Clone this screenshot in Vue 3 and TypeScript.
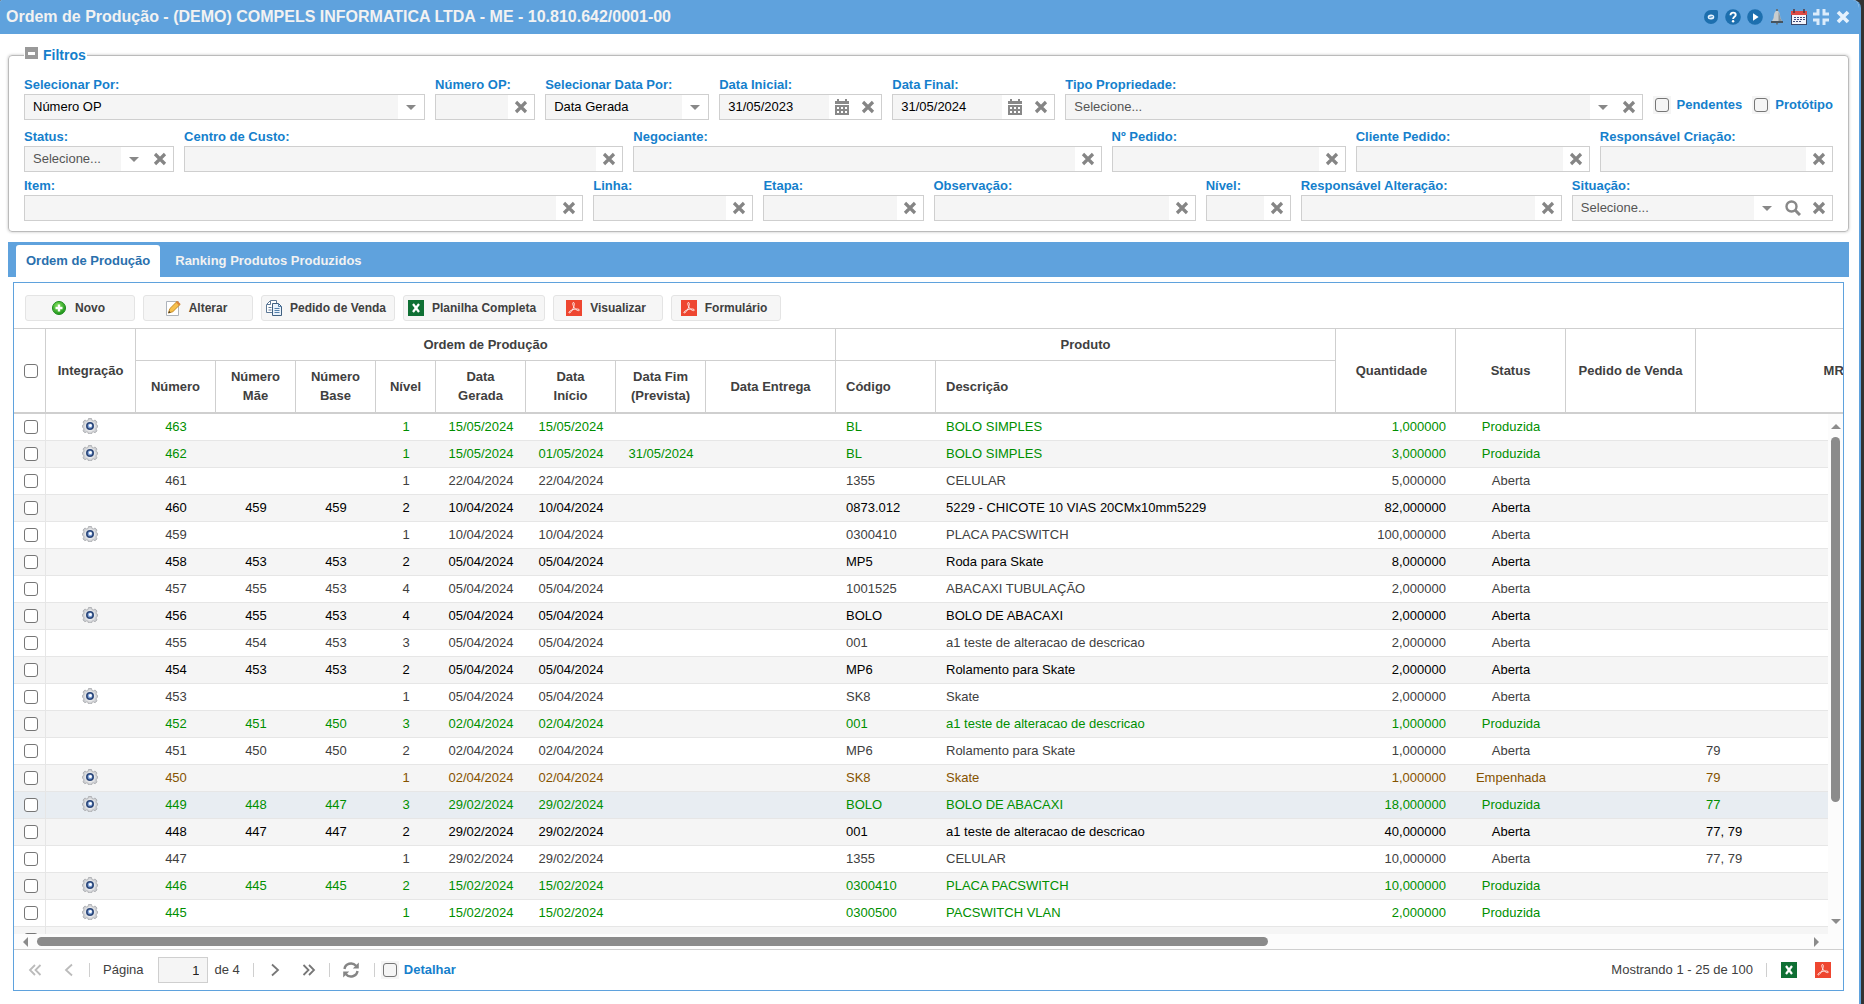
<script setup lang="ts">
import { ref } from 'vue'

type Trigger = 'arrow' | 'clear' | 'calendar' | 'search'

interface Field {
  id: string
  label: string
  kind: 'select' | 'text'
  value: string
  triggers: Trigger[]
}

interface Order {
  gear: boolean
  numero: string
  mae: string
  base: string
  nivel: string
  gerada: string
  inicio: string
  fim: string
  codigo: string
  descricao: string
  quantidade: string
  status: string
  mrp: string
}

const select = (id: string, label: string, value: string, ...triggers: Trigger[]): Field =>
  ({ id, label, kind: 'select', value, triggers })
const text = (id: string, label: string, value = '', ...triggers: Trigger[]): Field =>
  ({ id, label, kind: 'text', value, triggers: triggers.length ? triggers : ['clear'] })

const filterRows: Field[][] = [
  [
    select('selecionar-por', 'Selecionar Por:', 'Número OP', 'arrow'),
    text('numero-op', 'Número OP:'),
    select('selecionar-data', 'Selecionar Data Por:', 'Data Gerada', 'arrow'),
    text('data-inicial', 'Data Inicial:', '31/05/2023', 'calendar', 'clear'),
    text('data-final', 'Data Final:', '31/05/2024', 'calendar', 'clear'),
    select('tipo-propriedade', 'Tipo Propriedade:', 'Selecione...', 'arrow', 'clear'),
  ],
  [
    select('status', 'Status:', 'Selecione...', 'arrow', 'clear'),
    text('centro-custo', 'Centro de Custo:'),
    text('negociante', 'Negociante:'),
    text('pedido', 'Nº Pedido:'),
    text('cliente-pedido', 'Cliente Pedido:'),
    text('resp-criacao', 'Responsável Criação:'),
  ],
  [
    text('item', 'Item:'),
    text('linha', 'Linha:'),
    text('etapa', 'Etapa:'),
    text('observacao', 'Observação:'),
    text('nivel', 'Nível:'),
    text('resp-alteracao', 'Responsável Alteração:'),
    select('situacao', 'Situação:', 'Selecione...', 'arrow', 'search', 'clear'),
  ],
]

const triggerNames: Record<Trigger, string> = {
  arrow: 'Abrir lista', clear: 'Limpar', calendar: 'Calendário', search: 'Pesquisar',
}

const titleTools = [
  { icon: 'chat', name: 'Chat' },
  { icon: 'help', name: 'Ajuda' },
  { icon: 'play', name: 'Vídeo' },
  { icon: 'bell', name: 'Alertas' },
  { icon: 'agenda', name: 'Agenda' },
  { icon: 'restore', name: 'Restaurar' },
  { icon: 'close', name: 'Fechar' },
]

const actions = [
  { icon: 'add', label: 'Novo' },
  { icon: 'edit', label: 'Alterar' },
  { icon: 'copy', label: 'Pedido de Venda' },
  { icon: 'excel', label: 'Planilha Completa' },
  { icon: 'pdf', label: 'Visualizar' },
  { icon: 'pdf', label: 'Formulário' },
]

const order = (
  gear: boolean, numero: string, mae: string, base: string, nivel: string, gerada: string, inicio: string,
  fim: string, codigo: string, descricao: string, quantidade: string, status: string, mrp = '',
): Order => ({ gear, numero, mae, base, nivel, gerada, inicio, fim, codigo, descricao, quantidade, status, mrp })

const orders: Order[] = [
  order(true, '463', '', '', '1', '15/05/2024', '15/05/2024', '', 'BL', 'BOLO SIMPLES', '1,000000', 'Produzida'),
  order(true, '462', '', '', '1', '15/05/2024', '01/05/2024', '31/05/2024', 'BL', 'BOLO SIMPLES', '3,000000', 'Produzida'),
  order(false, '461', '', '', '1', '22/04/2024', '22/04/2024', '', '1355', 'CELULAR', '5,000000', 'Aberta'),
  order(false, '460', '459', '459', '2', '10/04/2024', '10/04/2024', '', '0873.012', '5229 - CHICOTE 10 VIAS 20CMx10mm5229', '82,000000', 'Aberta'),
  order(true, '459', '', '', '1', '10/04/2024', '10/04/2024', '', '0300410', 'PLACA PACSWITCH', '100,000000', 'Aberta'),
  order(false, '458', '453', '453', '2', '05/04/2024', '05/04/2024', '', 'MP5', 'Roda para Skate', '8,000000', 'Aberta'),
  order(false, '457', '455', '453', '4', '05/04/2024', '05/04/2024', '', '1001525', 'ABACAXI TUBULAÇÃO', '2,000000', 'Aberta'),
  order(true, '456', '455', '453', '4', '05/04/2024', '05/04/2024', '', 'BOLO', 'BOLO DE ABACAXI', '2,000000', 'Aberta'),
  order(false, '455', '454', '453', '3', '05/04/2024', '05/04/2024', '', '001', 'a1 teste de alteracao de descricao', '2,000000', 'Aberta'),
  order(false, '454', '453', '453', '2', '05/04/2024', '05/04/2024', '', 'MP6', 'Rolamento para Skate', '2,000000', 'Aberta'),
  order(true, '453', '', '', '1', '05/04/2024', '05/04/2024', '', 'SK8', 'Skate', '2,000000', 'Aberta'),
  order(false, '452', '451', '450', '3', '02/04/2024', '02/04/2024', '', '001', 'a1 teste de alteracao de descricao', '1,000000', 'Produzida'),
  order(false, '451', '450', '450', '2', '02/04/2024', '02/04/2024', '', 'MP6', 'Rolamento para Skate', '1,000000', 'Aberta', '79'),
  order(true, '450', '', '', '1', '02/04/2024', '02/04/2024', '', 'SK8', 'Skate', '1,000000', 'Empenhada', '79'),
  order(true, '449', '448', '447', '3', '29/02/2024', '29/02/2024', '', 'BOLO', 'BOLO DE ABACAXI', '18,000000', 'Produzida', '77'),
  order(false, '448', '447', '447', '2', '29/02/2024', '29/02/2024', '', '001', 'a1 teste de alteracao de descricao', '40,000000', 'Aberta', '77, 79'),
  order(false, '447', '', '', '1', '29/02/2024', '29/02/2024', '', '1355', 'CELULAR', '10,000000', 'Aberta', '77, 79'),
  order(true, '446', '445', '445', '2', '15/02/2024', '15/02/2024', '', '0300410', 'PLACA PACSWITCH', '10,000000', 'Produzida'),
  order(true, '445', '', '', '1', '15/02/2024', '15/02/2024', '', '0300500', 'PACSWITCH VLAN', '2,000000', 'Produzida'),
  order(false, '', '', '', '', '', '', '', '', '', '', ''),
]

const activeRow = ref('449')
const page = ref('1')
const columns = ['check', 'integ', 'num', 'num', 'num', 'level', 'date', 'date', 'date', 'due', 'code', 'desc', 'qty', 'state', 'sale', 'mrp']
</script>

<template>
  <svg class="sprite" aria-hidden="true">
    <defs>
      <radialGradient id="g-add" cx="0.4" cy="0.3" r="0.8">
        <stop offset="0" stop-color="#7fe05a" /><stop offset="1" stop-color="#118a12" />
      </radialGradient>
      <radialGradient id="g-gear"><stop offset="0.3" stop-color="#fff" /><stop offset="1" stop-color="#c4c6ca" /></radialGradient>
    </defs>
    <symbol id="i-arrow" viewBox="0 0 16 16"><path d="M3 6h10l-5 5z" fill="#888" /></symbol>
    <symbol id="i-clear" viewBox="0 0 16 16"><path d="M3 3l10 10M13 3L3 13" stroke="#858585" stroke-width="3.200" fill="none" /></symbol>
    <symbol id="i-calendar" viewBox="0 0 16 16">
      <path fill="#888" fill-rule="evenodd" d="M1 2h2V0h2v2h6V0h2v2h2v3H1zM1 6h14v10H1zM3 8v2h2V8zM7 8v2h2V8zM11 8v2h2V8zM3 12v2h2v-2zM7 12v2h2v-2zM11 12v2h2v-2z" />
    </symbol>
    <symbol id="i-search" viewBox="0 0 16 16"><circle cx="6.500" cy="6.500" r="5" fill="none" stroke="#888" stroke-width="2.400" /><path d="M10 10l5 5" stroke="#888" stroke-width="3" /></symbol>
    <symbol id="i-chat" viewBox="0 0 16 16"><path d="M8 1h5.500q1.500 0 1.500 1.500V8a7 7 0 0 1-14 0a7 7 0 0 1 7-7z" fill="#1d6fae" /><ellipse cx="8" cy="8" rx="3.300" ry="2.500" fill="#e8f4ff" /><path d="M6.300 8.300l3.400-.6" stroke="#1d6fae" /></symbol>
    <symbol id="i-help" viewBox="0 0 16 16"><circle cx="8" cy="8" r="7.800" fill="#1d6fae" /><path d="M5.500 6.200c0-3.600 5.200-3.200 5.200-.3C10.700 7.700 8.100 7.800 8.100 9.900" fill="none" stroke="#fff" stroke-width="1.900" /><circle cx="8.100" cy="12.200" r="1.200" fill="#fff" /></symbol>
    <symbol id="i-play" viewBox="0 0 16 16"><circle cx="8" cy="8" r="7.800" fill="#1d6fae" /><path d="M6 4.300L11.600 8 6 11.700z" fill="#fff" /></symbol>
    <symbol id="i-bell" viewBox="0 0 16 16"><path d="M8 1.500c3.200 1 3 5 3.400 7.500L13 12H3l1.600-3C5 6.500 4.800 2.500 8 1.500z" fill="#c9cdcf" /><path d="M9.500 3c1.500 2 1.300 4.500 2 6.500l1.500 2.500H9.500z" fill="#8d979d" /><path d="M2 12h12v2H2z" fill="#46545f" /><path d="M7 0h2v2H7zM7 14h2v1.500H7z" fill="#66737d" /></symbol>
    <symbol id="i-agenda" viewBox="0 0 16 16"><path d="M0 2h16v14H0z" fill="#3a4566" /><path d="M0 2h16v4H0z" fill="#dd4a45" /><path d="M3 0v4M13 0v4" stroke="#4c3238" stroke-width="1.400" /><path d="M1 6h14v9H1z" fill="#f3f4fa" /><path d="M3 8.500h11M3 10.500h11M2 12.500h9" stroke="#3e4a7c" stroke-dasharray="2 1" /></symbol>
    <symbol id="i-restore" viewBox="0 0 16 16"><path d="M5 0v5H0M11 0v5h5M5 16v-5H0M11 16v-5h5" fill="none" stroke="#dcecfb" stroke-width="3" /></symbol>
    <symbol id="i-close" viewBox="0 0 16 16"><path d="M3 3l10 10M13 3L3 13" stroke="#e6f2fd" stroke-width="3.600" /></symbol>
    <symbol id="i-add" viewBox="0 0 16 16"><circle cx="8" cy="8" r="6.500" fill="url(#g-add)" stroke="#1d8c1c" /><path d="M8 4.500v7M4.500 8h7" stroke="#fff" stroke-width="2.400" /></symbol>
    <symbol id="i-edit" viewBox="0 0 16 16"><path d="M1.500 1.500h12v14h-12z" fill="#fff" stroke="#aeb4bc" /><path d="M3.500 13l1.300-4.300L12 1.500l3 3-7.200 7.200z" fill="#f6c04c" stroke="#c58a25" /><path d="M11 2.500l1.500-1.500 3 3L14 5.500z" fill="#d9843f" /><path d="M3.300 13.300l.8-2.300 1.500 1.500z" fill="#333" /></symbol>
    <symbol id="i-copy" viewBox="0 0 16 16"><path d="M4.500.5h6v12H.5v-8z" fill="#fff" stroke="#5c7896" /><path d="M4.500 1v3.500H1M2.500 7.500h3M2.500 10h3" fill="none" stroke="#5c7896" /><path d="M6.500 3.500h6l3 3v9h-9z" fill="#e9f2fb" stroke="#3f5f80" /><path d="M12.500 3.500v3h3M8.500 8.500h5M8.500 10.500h5M8.500 12.500h5" fill="none" stroke="#5480aa" /></symbol>
    <symbol id="i-excel" viewBox="0 0 16 16"><path d="M0 0h16v16H0z" fill="#0f7034" /><path d="M5 4l6 8M11 4l-6 8" stroke="#fff" stroke-width="2.200" /></symbol>
    <symbol id="i-pdf" viewBox="0 0 16 16"><path d="M0 0h16v16H0z" fill="#ee4630" /><path d="M7.300 2.500c2 0 .8 4-.3 6.200-1 2.100-3 4.800-4 4.200-1-.9 2.300-3 5-3.600 2.700-.7 5.500-.3 5.400.8-.2 1.300-3.300.2-4.900-2-1.500-1.900-2.400-5.600-1.200-5.600z" fill="none" stroke="#fff" stroke-width="0.800" /></symbol>
    <symbol id="i-gear" viewBox="0 0 16 16"><path d="M6.500.5h3l.5 2 1.200.5 1.900-1 1.900 2-1 1.900.5 1.100 1 .3v2l-1 .5-.5 1.200 1 1.900-1.900 1.900-1.900-1-1.200.5-.5 1.700h-3l-.5-1.700-1.200-.5-1.900 1L1 12.900 2 11l-.5-1.200-1-.5v-2l1-.3L2 5.900 1 4l1.900-2 1.900 1L6 2.500z" fill="url(#g-gear)" stroke="#a9abaf" stroke-width="0.800" /><circle cx="8" cy="8" r="3.200" fill="#7fa2d8" stroke="#2b4678" stroke-width="1.600" /><circle cx="8.400" cy="7.600" r="1.500" fill="#fff" /></symbol>
    <symbol id="i-first" viewBox="0 0 16 16"><path d="M8 3L3 8l5 5M13.500 3l-5 5 5 5" fill="none" stroke="#bbb" stroke-width="1.800" /></symbol>
    <symbol id="i-prev" viewBox="0 0 16 16"><path d="M11 2.500L5 8l6 5.500" fill="none" stroke="#bbb" stroke-width="1.800" /></symbol>
    <symbol id="i-next" viewBox="0 0 16 16"><path d="M5 2.500L11 8l-6 5.500" fill="none" stroke="#777" stroke-width="1.800" /></symbol>
    <symbol id="i-last" viewBox="0 0 16 16"><path d="M2.500 3l5 5-5 5M8 3l5 5-5 5" fill="none" stroke="#777" stroke-width="1.800" /></symbol>
    <symbol id="i-refresh" viewBox="0 0 16 16"><path d="M1.500 7A6.500 6.200 0 0 1 13 3.800M14.500 9A6.500 6.200 0 0 1 3 12.200" fill="none" stroke="#858585" stroke-width="2.400" /><path d="M15.800.5v6h-6zM.2 15.500v-6h6z" fill="#858585" /></symbol>
  </svg>

  <div class="window">
    <header class="titlebar">
      <h1>Ordem de Produção - (DEMO) COMPELS INFORMATICA LTDA - ME - 10.810.642/0001-00</h1>
      <div class="tools">
        <button v-for="tool in titleTools" :key="tool.icon" type="button" :aria-label="tool.name">
          <svg class="icon"><use :href="'#i-' + tool.icon" /></svg>
        </button>
      </div>
    </header>

    <main>
      <fieldset>
        <legend>
          <button type="button" class="collapse" aria-label="Recolher filtros"></button>
          Filtros
        </legend>
        <div v-for="(row, r) in filterRows" :key="r" class="filters" :class="'filters-' + (r + 1)">
          <div v-for="field in row" :key="field.id" class="field">
            <label :for="field.id">{{ field.label }}</label>
            <div class="box">
              <select v-if="field.kind === 'select'" :id="field.id" :class="{ hint: field.value === 'Selecione...' }">
                <option>{{ field.value }}</option>
              </select>
              <input v-else :id="field.id" type="text" :value="field.value" />
              <button v-for="t in field.triggers" :key="t" type="button" :aria-label="triggerNames[t]">
                <svg class="icon"><use :href="'#i-' + t" /></svg>
              </button>
            </div>
          </div>
          <div v-if="r === 0" class="flags">
            <label><span class="tick"><input type="checkbox" /></span>Pendentes</label>
            <label><span class="tick"><input type="checkbox" /></span>Protótipo</label>
          </div>
        </div>
      </fieldset>

      <nav class="tabs">
        <button type="button" class="active">Ordem de Produção</button>
        <button type="button">Ranking Produtos Produzidos</button>
      </nav>

      <section class="panel">
        <div class="toolbar">
          <button v-for="action in actions" :key="action.label" type="button">
            <svg class="icon"><use :href="'#i-' + action.icon" /></svg>
            <span>{{ action.label }}</span>
          </button>
        </div>

        <div class="grid">
          <div class="viewport">
            <table>
              <colgroup>
                <col v-for="(c, i) in columns" :key="i" :class="'col-' + c" />
              </colgroup>
              <thead>
                <tr class="group">
                  <th rowspan="2" class="check"><input type="checkbox" aria-label="Selecionar todos" /></th>
                  <th rowspan="2">Integração</th>
                  <th colspan="8" class="span">Ordem de Produção</th>
                  <th colspan="2" class="span">Produto</th>
                  <th rowspan="2" class="qty">Quantidade</th>
                  <th rowspan="2">Status</th>
                  <th rowspan="2">Pedido de Venda</th>
                  <th rowspan="2">MRP</th>
                </tr>
                <tr class="leaf">
                  <th>Número</th>
                  <th>Número<br />Mãe</th>
                  <th>Número<br />Base</th>
                  <th>Nível</th>
                  <th>Data<br />Gerada</th>
                  <th>Data<br />Início</th>
                  <th>Data Fim<br />(Prevista)</th>
                  <th>Data Entrega</th>
                  <th class="left">Código</th>
                  <th class="left">Descrição</th>
                </tr>
              </thead>
              <tbody>
                <tr
                  v-for="(o, i) in orders"
                  :key="i"
                  :class="[o.status.toLowerCase(), { alt: i % 2 === 1, active: o.numero === activeRow }]"
                  @click="activeRow = o.numero"
                >
                  <td class="check"><input type="checkbox" aria-label="Selecionar ordem" /></td>
                  <td><svg v-if="o.gear" class="icon gear"><use href="#i-gear" /></svg></td>
                  <td>{{ o.numero }}</td>
                  <td>{{ o.mae }}</td>
                  <td>{{ o.base }}</td>
                  <td>{{ o.nivel }}</td>
                  <td>{{ o.gerada }}</td>
                  <td>{{ o.inicio }}</td>
                  <td>{{ o.fim }}</td>
                  <td></td>
                  <td class="left">{{ o.codigo }}</td>
                  <td class="left">{{ o.descricao }}</td>
                  <td class="right">{{ o.quantidade }}</td>
                  <td>{{ o.status }}</td>
                  <td></td>
                  <td class="left">{{ o.mrp }}</td>
                </tr>
              </tbody>
            </table>
          </div>
          <div class="vscroll"><i class="up"></i><div class="track"><b></b></div><i class="down"></i></div>
        </div>
        <div class="hscroll"><i class="prev"></i><div class="track"><b></b></div><i class="next"></i></div>

        <footer class="pager">
          <button type="button" aria-label="Primeira página" disabled><svg class="icon"><use href="#i-first" /></svg></button>
          <button type="button" aria-label="Página anterior" disabled><svg class="icon"><use href="#i-prev" /></svg></button>
          <span class="sep"></span>
          <label class="page" for="pagina">Página</label>
          <input id="pagina" v-model="page" type="text" class="page-box" />
          <span class="total">de 4</span>
          <span class="sep"></span>
          <button type="button" class="forward" aria-label="Próxima página"><svg class="icon"><use href="#i-next" /></svg></button>
          <button type="button" aria-label="Última página"><svg class="icon"><use href="#i-last" /></svg></button>
          <span class="sep"></span>
          <button type="button" class="reload" aria-label="Atualizar"><svg class="icon"><use href="#i-refresh" /></svg></button>
          <span class="sep"></span>
          <label class="detail"><span class="tick"><input type="checkbox" /></span>Detalhar</label>
          <span class="showing">Mostrando 1 - 25 de 100</span>
          <span class="sep"></span>
          <button type="button" class="export" aria-label="Exportar planilha"><svg class="icon"><use href="#i-excel" /></svg></button>
          <button type="button" class="export" aria-label="Exportar PDF"><svg class="icon"><use href="#i-pdf" /></svg></button>
        </footer>
      </section>
    </main>
  </div>
</template>

<style>
body {
  margin: 0;
  background: #333;
}
</style>

<style scoped>
.sprite {
  position: absolute;
  width: 0;
  height: 0;
}

.window {
  box-sizing: border-box;
  display: flex;
  flex-direction: column;
  height: 100vh;
  margin-right: 3px;
  border-right: 2px solid #5fa2dd;
  border-radius: 2px 8px 0 0;
  overflow: hidden;
  background: #fff;
  color: #404040;
  font: 13px/16px "Liberation Sans", Arial, sans-serif;
}

button {
  padding: 0;
  border: 0;
  background: none;
  color: inherit;
  font: inherit;
}

.icon {
  display: block;
  width: 16px;
  height: 16px;
}

input[type='checkbox'] {
  appearance: none;
  box-sizing: border-box;
  display: block;
  width: 14px;
  height: 14px;
  margin: 0;
  border: 1px solid #767676;
  border-radius: 3px;
  background: #fff;
}

input[type='checkbox']:checked {
  background: #157fcc;
}

.tick {
  display: flex;
  align-items: center;
  justify-content: center;
  width: 18px;
  height: 18px;
  background: #f5f5f5;
}

.tick input[type='checkbox'] {
  background: #f5f5f5;
}

.titlebar {
  flex: none;
  display: flex;
  align-items: center;
  justify-content: space-between;
  height: 34px;
  padding: 0 8px 0 6px;
  background: #5fa2dd;
}

h1 {
  margin: 0;
  color: #f2f2f2;
  font-size: 16px;
  line-height: 20px;
  font-weight: bold;
}

.tools {
  display: flex;
  gap: 6px;
}

main {
  flex: 1;
  min-height: 0;
  display: flex;
  flex-direction: column;
  padding: 13px 10px 13px 8px;
}

fieldset {
  min-width: 0;
  margin: 0;
  padding: 14px 15px 10px;
  border: 1px solid #bbb;
  border-radius: 4px;
  box-shadow: 0 0 3px rgba(0, 0, 0, 0.25);
}

legend {
  display: flex;
  align-items: center;
  gap: 5px;
  padding: 0 1px;
  background: #fff;
  color: #157fcc;
  font-size: 14px;
  font-weight: bold;
}

.collapse {
  box-sizing: border-box;
  align-self: flex-start;
  width: 13px;
  height: 12px;
  border: solid #999;
  border-width: 5px 3px 4px;
  background: #fff;
}

.filters {
  display: grid;
  gap: 10px;
}

.filters-1 {
  grid-template-columns: 401fr 100fr 164fr 163fr 163fr 578fr auto;
}

.filters-2 {
  grid-template-columns: 150fr 439fr 468fr 234fr 234fr 233fr;
  margin-top: 9px;
}

.filters-3 {
  grid-template-columns: 559fr 160fr 160fr 262fr 85fr 261fr 261fr;
  margin-top: 6px;
}

.field {
  min-width: 0;
}

.field label {
  display: block;
  height: 17px;
  color: #157fcc;
  font-weight: bold;
  white-space: nowrap;
}

.box {
  display: flex;
  height: 24px;
  border: 1px solid #cfcfcf;
}

.box input,
.box select {
  appearance: none;
  flex: 1;
  min-width: 0;
  margin: 0;
  padding: 0 8px;
  border: 0;
  border-radius: 0;
  outline: 0;
  background: #f5f5f5;
  color: #000;
  font: inherit;
}

.box select.hint {
  color: #555;
}

.box button {
  flex: none;
  display: flex;
  align-items: center;
  justify-content: center;
  width: 26px;
}

.flags {
  align-self: end;
  display: flex;
  gap: 10px;
  margin-bottom: 6px;
}

.flags label,
.detail {
  display: flex;
  align-items: center;
  gap: 5px;
  color: #157fcc;
  font-weight: bold;
}

.tabs {
  flex: none;
  display: flex;
  height: 32px;
  margin-top: 10px;
  padding: 3px 8px 0;
  background: #5fa2dd;
}

.tabs button {
  padding: 0 15px;
  color: #f2f2f2;
  font-weight: bold;
}

.tabs .active {
  padding: 0 10px;
  border-radius: 3px 3px 0 0;
  background: #fff;
  color: #2a70ad;
}

.panel {
  flex: 1;
  min-height: 0;
  display: flex;
  flex-direction: column;
  margin: 5px 5px 0;
  border: 1px solid #5fa2dd;
}

.toolbar {
  flex: none;
  display: flex;
  gap: 8px;
  padding: 12px 11px 7px;
}

.toolbar button {
  box-sizing: border-box;
  display: flex;
  align-items: center;
  justify-content: center;
  gap: 8px;
  min-width: 110px;
  height: 26px;
  padding: 0 8px 0 4px;
  border: 1px solid #e4e4e4;
  border-radius: 3px;
  background: #f6f6f6;
  font-size: 12px;
  font-weight: bold;
}

.grid {
  position: relative;
  flex: 1;
  min-height: 0;
  border-top: 1px solid #cfcfcf;
}

.viewport {
  height: 100%;
  overflow: auto;
  scrollbar-width: none;
}

table {
  width: 1967px;
  table-layout: fixed;
  border-collapse: separate;
  border-spacing: 0;
}

.col-check { width: 32px; }
.col-integ,
.col-date { width: 90px; }
.col-num { width: 80px; }
.col-level { width: 60px; }
.col-due,
.col-sale { width: 130px; }
.col-code { width: 100px; }
.col-desc { width: 400px; }
.col-qty { width: 120px; }
.col-state { width: 110px; }
.col-mrp { width: 285px; }

th,
td {
  box-sizing: border-box;
  padding: 0;
  text-align: center;
  vertical-align: middle;
  white-space: nowrap;
}

th {
  border-right: 1px solid #cfcfcf;
  border-bottom: 2px solid #cfcfcf;
  line-height: 19px;
}

th.span {
  border-bottom-width: 1px;
}

.group {
  height: 32px;
}

.leaf {
  height: 53px;
}

.leaf th {
  padding-bottom: 1px;
}

th.qty {
  padding-right: 8px;
}

td {
  height: 27px;
  border-bottom: 1px solid #e6e6e6;
}

td.check {
  border-right: 1px solid #e6e6e6;
}

.check {
  padding-left: 10px;
}

.left {
  padding-left: 10px;
  text-align: left;
}

.right {
  padding-right: 10px;
  text-align: right;
}

.gear {
  margin: 0 36px 2px;
}

tr.alt {
  background: #f5f5f5;
  color: #000;
}

tr.produzida {
  color: #008f00;
}

tr.empenhada {
  color: #855300;
}

tr.active {
  background: #e8edf2;
}

.vscroll {
  position: absolute;
  top: 85px;
  right: 0;
  bottom: 0;
  display: flex;
  flex-direction: column;
  align-items: center;
  width: 15px;
  padding: 10px 0;
  box-sizing: border-box;
  background: #fcfcfc;
}

.track {
  flex: 1;
}

.track b {
  display: block;
  border-radius: 5px;
  background: #8b8b8b;
}

.vscroll .track {
  padding: 8px 0;
}

.vscroll .track b {
  width: 9px;
  height: 77%;
}

.up,
.down {
  border: solid transparent;
  border-width: 0 5px;
}

.up {
  border-bottom: 5px solid #8b8b8b;
}

.down {
  border-top: 5px solid #8b8b8b;
}

.hscroll {
  flex: none;
  display: flex;
  align-items: center;
  height: 15px;
  padding: 0 24px 0 9px;
  background: #fcfcfc;
}

.hscroll .track {
  padding: 0 18px 0 9px;
}

.hscroll .track b {
  width: 70%;
  height: 9px;
}

.prev,
.next {
  border: solid transparent;
  border-width: 5px 0;
}

.prev {
  border-right: 5px solid #8b8b8b;
}

.next {
  border-left: 5px solid #8b8b8b;
}

.pager {
  flex: none;
  display: flex;
  align-items: center;
  height: 40px;
  padding: 0 12px 0 4px;
  border-top: 1px solid #cfcfcf;
}

.pager button {
  display: flex;
  justify-content: center;
  width: 34px;
}

.pager .forward {
  margin-left: 3px;
}

.pager .reload {
  width: 40px;
}

.pager .export {
  width: 16px;
  margin-left: 18px;
}

.pager .sep + .export {
  margin-left: 13px;
}

.sep {
  width: 1px;
  height: 14px;
  margin: 0 1px 0 3px;
  background: #cfcfcf;
}

.page {
  margin-left: 12px;
}

.page-box {
  box-sizing: border-box;
  width: 50px;
  height: 26px;
  margin: 0 6px 0 15px;
  padding: 0 8px;
  border: 1px solid #cfcfcf;
  background: #f5f5f5;
  color: #222;
  font: inherit;
  text-align: right;
}

.total {
  margin-right: 10px;
}

.detail {
  margin-left: 5px;
}

.showing {
  margin: 0 10px 0 auto;
}
</style>
